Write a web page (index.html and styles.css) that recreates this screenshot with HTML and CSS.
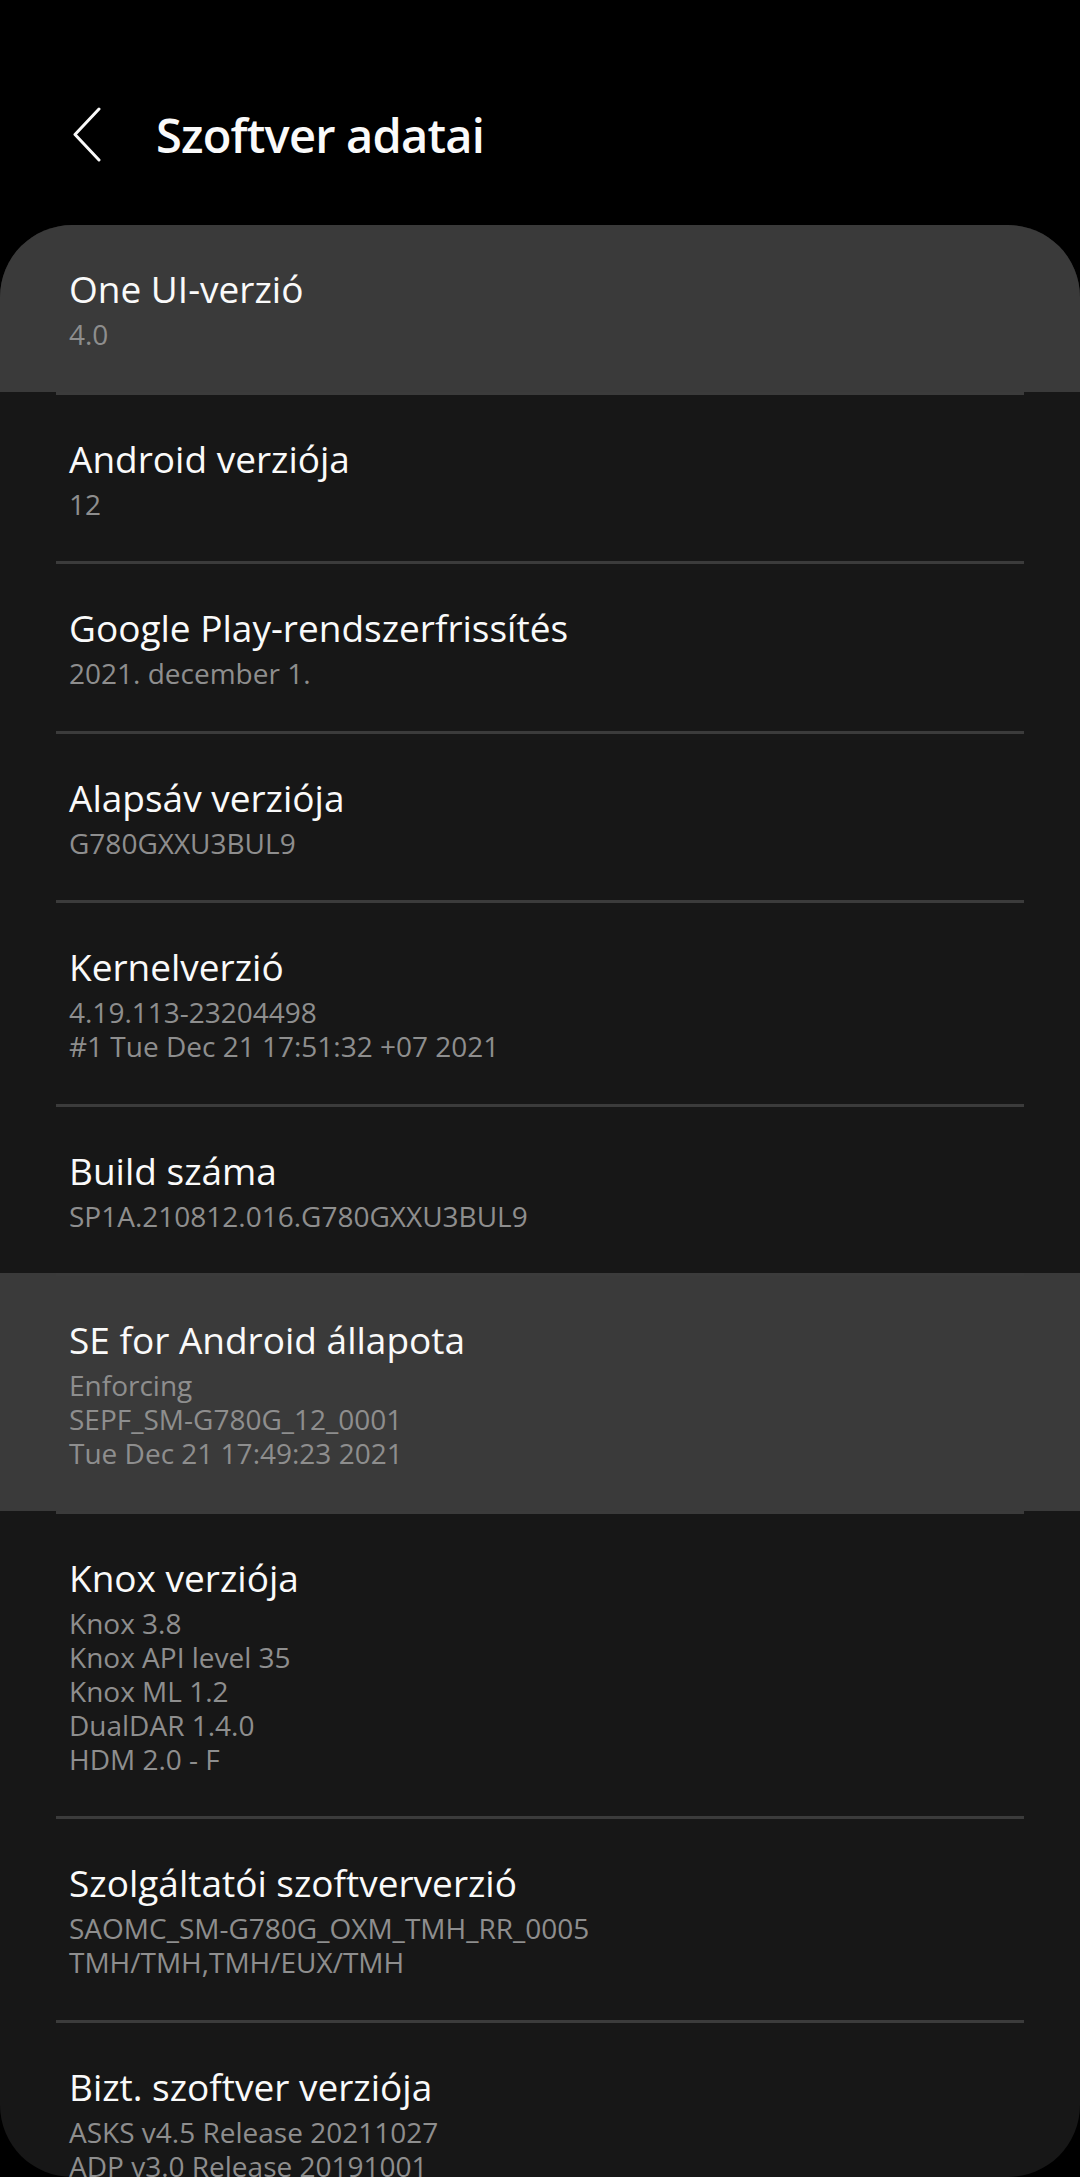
FILE: index.html
```html
<!DOCTYPE html>
<html lang="hu">
<head>
  <meta charset="UTF-8">
  <meta name="viewport" content="width=device-width, initial-scale=1.0">
  <title>Szoftver adatai</title>
  <link rel="stylesheet" href="styles.css">
</head>
<body>
  <div class="header">
    <svg class="back" viewBox="0 0 30 55" aria-label="Vissza">
      <polyline points="27,2 3,27.5 27,53" />
    </svg>
    <h1>Szoftver adatai</h1>
  </div>

  <div class="panel">
    <div class="row active">
      <div class="row-body first">
        <div class="label">One UI-verzió</div>
        <div class="value">4.0</div>
      </div>
    </div>
    <div class="row">
      <div class="row-body">
        <div class="label">Android verziója</div>
        <div class="value">12</div>
      </div>
    </div>
    <div class="row">
      <div class="row-body">
        <div class="label">Google Play-rendszerfrissítés</div>
        <div class="value">2021. december 1.</div>
      </div>
    </div>
    <div class="row">
      <div class="row-body">
        <div class="label">Alapsáv verziója</div>
        <div class="value">G780GXXU3BUL9</div>
      </div>
    </div>
    <div class="row">
      <div class="row-body">
        <div class="label">Kernelverzió</div>
        <div class="value">4.19.113-23204498<br>#1 Tue Dec 21 17:51:32 +07 2021</div>
      </div>
    </div>
    <div class="row">
      <div class="row-body">
        <div class="label">Build száma</div>
        <div class="value">SP1A.210812.016.G780GXXU3BUL9</div>
      </div>
    </div>
    <div class="row active">
      <div class="row-body">
        <div class="label">SE for Android állapota</div>
        <div class="value">Enforcing<br>SEPF_SM-G780G_12_0001<br>Tue Dec 21 17:49:23 2021</div>
      </div>
    </div>
    <div class="row">
      <div class="row-body">
        <div class="label">Knox verziója</div>
        <div class="value">Knox 3.8<br>Knox API level 35<br>Knox ML 1.2<br>DualDAR 1.4.0<br>HDM 2.0 - F</div>
      </div>
    </div>
    <div class="row">
      <div class="row-body">
        <div class="label">Szolgáltatói szoftververzió</div>
        <div class="value">SAOMC_SM-G780G_OXM_TMH_RR_0005<br>TMH/TMH,TMH/EUX/TMH</div>
      </div>
    </div>
    <div class="row">
      <div class="row-body">
        <div class="label">Bizt. szoftver verziója</div>
        <div class="value">ASKS v4.5 Release 20211027<br>ADP v3.0 Release 20191001</div>
      </div>
    </div>
  </div>
</body>
</html>
```

FILE: styles.css
```css
* {
    margin: 0;
    padding: 0;
    box-sizing: border-box;
}

body {
    height: 2177px;
    overflow: hidden;
    background: #000;
    color: #fafafa;
    font-family: 'Open Sans', 'Noto Sans', sans-serif;
}

.header {
    height: 225px;
    padding-top: 44px;
    display: flex;
    align-items: center;
}

.back {
    width: 30px;
    height: 55px;
    margin-left: 72px;
    fill: none;
    stroke: #fafafa;
    stroke-width: 3;
    stroke-linecap: round;
    stroke-linejoin: round;
}

.header h1 {
    margin-left: 54px;
    font-size: 47px;
    font-weight: 600;
    letter-spacing: -0.8px;
}

.panel {
    height: 1952px;
    overflow: hidden;
    background: #171717;
    border-radius: 72px;
}

.row {
    padding: 0 56px;
}

.row.active {
    background: #3a3a3a;
}

.row-body {
    border-top: 3px solid #3b3b3b;
    padding: 36px 13px 40.5px;
}

.row-body.first {
    border-top: none;
}

.label {
    font-size: 37px;
    line-height: 56px;
    color: #fafafa;
}

.value {
    font-size: 28px;
    line-height: 34px;
    color: #8e8e8e;
}
```
